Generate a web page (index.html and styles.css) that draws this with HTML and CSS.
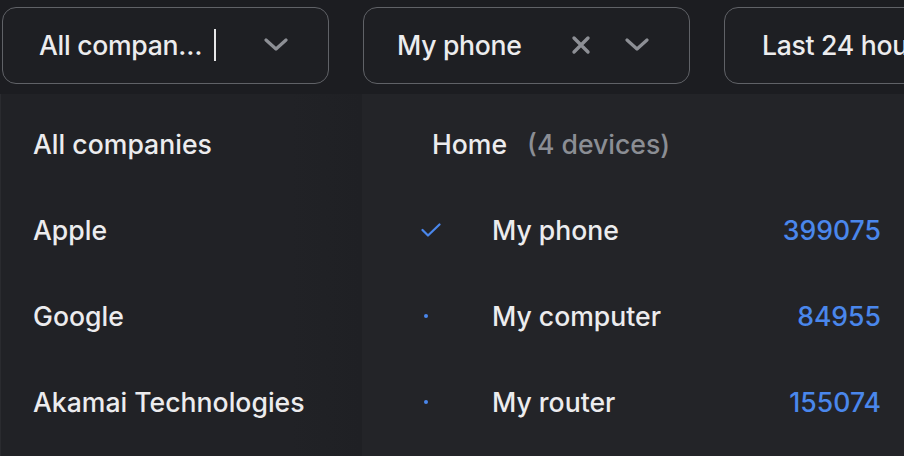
FILE: index.html
```html
<!DOCTYPE html>
<html>
<head>
<meta charset="utf-8">
<link rel="stylesheet" href="styles.css">
</head>
<body>
<div class="page">
  <div class="filters">
    <div class="select">
      <span class="value">All compan…</span>
      <span class="caret"></span>
      <span class="spacer"></span>
      <svg class="chev" viewBox="0 0 24 14" width="24" height="14"><polyline points="2,2 12,11 22,2" fill="none" stroke="#8d8f95" stroke-width="3.2" stroke-linecap="round" stroke-linejoin="round"/></svg>
    </div>
    <div class="select select-2">
      <span class="value">My phone</span>
      <span class="spacer"></span>
      <svg class="clear" viewBox="0 0 20 20" width="20" height="20"><path d="M3 3 L17 17 M17 3 L3 17" stroke="#8d8f95" stroke-width="3.4" stroke-linecap="round"/></svg>
      <svg class="chev chev-2" viewBox="0 0 24 14" width="24" height="14"><polyline points="2,2 12,11 22,2" fill="none" stroke="#8d8f95" stroke-width="3.2" stroke-linecap="round" stroke-linejoin="round"/></svg>
    </div>
    <div class="select select-3">
      <span class="value">Last 24 hours</span>
    </div>
  </div>
  <div class="dropdown">
    <ul class="companies">
      <li class="company">All companies</li>
      <li class="company">Apple</li>
      <li class="company">Google</li>
      <li class="company">Akamai Technologies</li>
    </ul>
    <div class="devices">
      <div class="group-head"><span class="group-name">Home</span><span class="group-count">(4 devices)</span></div>
      <div class="device">
        <span class="mark"><svg viewBox="0 0 20 14" width="20" height="14"><polyline points="1.5,7 7,12.5 18.5,1.5" fill="none" stroke="#4a87ec" stroke-width="2.2" stroke-linecap="round" stroke-linejoin="round"/></svg></span>
        <span class="name">My phone</span>
        <span class="count">399075</span>
      </div>
      <div class="device">
        <span class="mark"><span class="dot"></span></span>
        <span class="name">My computer</span>
        <span class="count">84955</span>
      </div>
      <div class="device">
        <span class="mark"><span class="dot"></span></span>
        <span class="name">My router</span>
        <span class="count">155074</span>
      </div>
    </div>
  </div>
</div>
</body>
</html>
```
FILE: styles.css
```css
html, body {
  margin: 0;
  padding: 0;
  background: #1c1d21;
  overflow: hidden;
}
body {
  width: 904px;
  height: 456px;
  font-family: Inter, "Noto Sans", sans-serif;
  color: #ececee;
  font-size: 26.6px;
  font-weight: 500;
}
.page {
  display: flex;
  flex-direction: column;
  height: 456px;
}
.filters {
  display: flex;
  gap: 34px;
  padding: 7px 0 0 2px;
  height: 77px;
  flex: none;
}
.select {
  flex: none;
  box-sizing: border-box;
  width: 327px;
  height: 77px;
  border: 1.5px solid #606267;
  border-radius: 14px;
  display: flex;
  align-items: center;
  padding: 0 40px 2px 36px;
  background: #1e1f23;
  overflow: hidden;
}
.select-2 {
  padding-left: 33px;
}
.select-3 {
  padding-left: 37px;
}
.value {
  white-space: nowrap;
  letter-spacing: -0.3px;
}
.caret {
  width: 2px;
  height: 32px;
  background: #e6e6e8;
  margin-left: 12px;
  flex: none;
}
.spacer {
  flex: 1;
}
.chev {
  display: block;
  flex: none;
}
.clear {
  display: block;
  flex: none;
  margin-right: 34px;
}
.dropdown {
  margin-top: 10px;
  flex: 1;
  display: flex;
  min-height: 0;
}
.companies {
  list-style: none;
  margin: 0;
  padding: 7px 0 0 0;
  width: 362px;
  flex: none;
  background: linear-gradient(90deg, #212226 0%, #212226 80%, #1f2024 100%);
  border-left: 1px solid #2a2b2f;
  box-sizing: border-box;
}
.company {
  height: 86px;
  display: flex;
  align-items: center;
  padding-left: 32px;
}
.devices {
  flex: 1;
  background: #232428;
  padding-top: 7px;
}
.group-head {
  height: 86px;
  display: flex;
  align-items: center;
  padding-left: 70px;
  gap: 20px;
}
.group-count {
  color: #8b8e94;
}
.device {
  height: 86px;
  display: flex;
  align-items: center;
  padding: 0 23px 0 59px;
}
.mark {
  width: 71px;
  flex: none;
  display: flex;
  align-items: center;
}
.mark svg {
  display: block;
}
.dot {
  width: 4px;
  height: 4px;
  border-radius: 50%;
  background: #4a87ec;
  margin-left: 3px;
}
.name {
  flex: 1;
}
.count {
  color: #4a87ec;
}
```
